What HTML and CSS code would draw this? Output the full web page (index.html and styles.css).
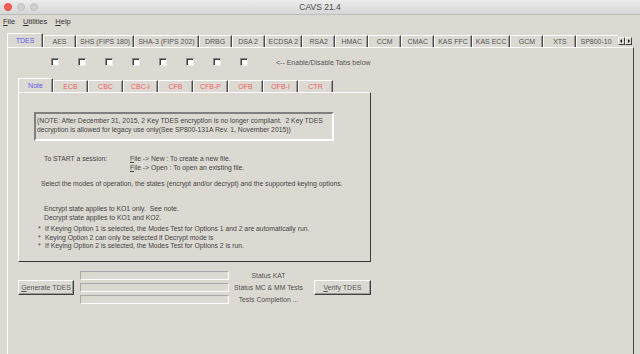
FILE: index.html
```html
<!DOCTYPE html>
<html lang="en">
  <head>
    <meta charset="UTF-8" />
    <title>CAVS 21.4</title>
    <link rel="stylesheet" href="styles.css">
  </head>
  <body>
    <div class="titlebar">
      <div class="lights">
        <span class="light red"></span>
        <span class="light"></span>
        <span class="light"></span>
      </div>
      <div class="title">CAVS 21.4</div>
    </div>

    <div class="menubar">
      <span class="menu"><u>F</u>ile</span>
      <span class="menu"><u>U</u>tilities</span>
      <span class="menu"><u>H</u>elp</span>
    </div>

    <div class="outer">
      <div class="tabs">
        <div class="tab selected">TDES</div>
        <div class="tab">AES</div>
        <div class="tab">SHS (FIPS 180)</div>
        <div class="tab">SHA-3 (FIPS 202)</div>
        <div class="tab">DRBG</div>
        <div class="tab">DSA 2</div>
        <div class="tab">ECDSA 2</div>
        <div class="tab">RSA2</div>
        <div class="tab">HMAC</div>
        <div class="tab">CCM</div>
        <div class="tab">CMAC</div>
        <div class="tab">KAS FFC</div>
        <div class="tab">KAS ECC</div>
        <div class="tab">GCM</div>
        <div class="tab">XTS</div>
        <div class="tab cut">SP800-10</div>
        <div class="scroll">
          <span class="arrow left"></span>
          <span class="arrow right"></span>
        </div>
      </div>

      <div class="panel">
        <div class="checks">
          <span class="check"></span>
          <span class="check"></span>
          <span class="check"></span>
          <span class="check"></span>
          <span class="check"></span>
          <span class="check"></span>
          <span class="check"></span>
          <span class="check"></span>
          <span class="check-label">&lt;-- Enable/Disable Tabs below</span>
        </div>

        <div class="subtabs">
          <div class="subtab selected">Note</div>
          <div class="subtab">ECB</div>
          <div class="subtab">CBC</div>
          <div class="subtab">CBC-I</div>
          <div class="subtab">CFB</div>
          <div class="subtab">CFB-P</div>
          <div class="subtab">OFB</div>
          <div class="subtab">OFB-I</div>
          <div class="subtab">CTR</div>
        </div>

        <div class="subpanel">
          <div class="note">
            (NOTE: After December 31, 2015, 2 Key TDES encryption is no longer compliant.&nbsp; 2 Key TDES<br>
            decryption is allowed for legacy use only(See SP800-131A Rev. 1, November 2015))
          </div>

          <div class="session">
            <span>To START a session:</span>
            <span><u>F</u>ile -&gt; New : To create a new file.</span>
            <span></span>
            <span><u>F</u>ile -&gt; Open : To open an existing file.</span>
          </div>

          <p class="select">Select the modes of operation, the states (encrypt and/or decrypt) and the supported keying options.</p>

          <div class="states">
            <p>Encrypt state applies to KO1 only.&nbsp; See note.</p>
            <p>Decrypt state applies to KO1 and KO2.</p>
          </div>

          <ul class="bullets">
            <li>If Keying Option 1 is selected, the Modes Test for Options 1 and 2 are automatically run.</li>
            <li>Keying Option 2 can only be selected if Decrypt mode is</li>
            <li>If Keying Option 2 is selected, the Modes Test for Options 2 is run.</li>
          </ul>
        </div>

        <div class="actions">
          <button class="btn gen"><u>G</u>enerate TDES</button>
          <div class="bars">
            <div class="bar"></div>
            <div class="bar"></div>
            <div class="bar"></div>
          </div>
          <div class="labels">
            <span>Status KAT</span>
            <span>Status MC &amp; MM Tests</span>
            <span>Tests Completion ...</span>
          </div>
          <button class="btn verify"><u>V</u>erify TDES</button>
        </div>
      </div>
    </div>
  </body>
</html>
```

FILE: styles.css
```css
* {
  margin: 0;
  padding: 0;
  box-sizing: border-box;
}

body {
  width: 640px;
  height: 354px;
  overflow: hidden;
  background: #dcd9d3;
  font-family: "Liberation Sans", Arial, sans-serif;
  font-size: 6.8px;
  color: #444;
}

u {
  text-decoration: underline;
  text-underline-offset: 1px;
}

/* window chrome */
.titlebar {
  height: 15px;
  position: relative;
  background: linear-gradient(#ececec, #d6d6d6);
  border-bottom: 1px solid #bdbdbd;
}

.lights {
  display: flex;
  gap: 5px;
  padding: 3px 0 0 4px;
}

.light {
  width: 8px;
  height: 8px;
  border-radius: 50%;
  background: #d0d0d0;
  border: 1px solid #c2c2c2;
}

.light.red {
  background: #fc605c;
  border-color: #e0443e;
}

.title {
  position: absolute;
  top: 2px;
  left: 0;
  right: 0;
  text-align: center;
  font-size: 8.5px;
  color: #4a4a4a;
}

.menubar {
  height: 13px;
  display: flex;
  gap: 8px;
  padding: 2px 0 0 3px;
  font-size: 7.5px;
  color: #333;
}

/* outer tab pane */
.outer {
  margin: 5px 0 0 7px;
  width: 627px;
}

.tabs {
  display: flex;
  align-items: flex-end;
  height: 14px;
}

.tab {
  flex-shrink: 0;
  height: 12px;
  min-width: 33px;
  padding: 0 3px;
  line-height: 11px;
  font-size: 7px;
  text-align: center;
  white-space: nowrap;
  color: #555;
  border-top: 1px solid #ffffff;
  border-left: 1px solid #ffffff;
  border-right: 1px solid #4a4a4a;
  box-shadow: inset -1px 0 #9a9a9a;
}

.tab.selected {
  height: 14px;
  min-width: 36px;
  line-height: 13px;
  color: #5a5aee;
}

.tab.cut {
  flex-shrink: 1;
  overflow: hidden;
  width: 42px;
  min-width: 0;
  padding: 0 0 0 3px;
  text-align: left;
  border-right: none;
  box-shadow: none;
}

.scroll {
  display: flex;
  flex-shrink: 0;
  align-self: center;
  margin-top: 1px;
}

.arrow {
  width: 7px;
  height: 8px;
  position: relative;
  background: #dcd9d3;
  border-top: 1px solid #fff;
  border-left: 1px solid #fff;
  border-right: 1px solid #404040;
  border-bottom: 1px solid #404040;
}

.arrow::after {
  content: "";
  position: absolute;
  top: 1px;
  left: 1px;
  border-top: 2px solid transparent;
  border-bottom: 2px solid transparent;
}

.arrow.left::after {
  border-right: 2px solid #111;
}

.arrow.right::after {
  left: 2px;
  border-left: 2px solid #111;
}

.panel {
  height: 310px;
  border-top: 1px solid #ffffff;
  border-left: 1px solid #ffffff;
  border-right: 1px solid #4a4a4a;
  padding: 0 0 0 10px;
}

.checks {
  display: flex;
  align-items: center;
  height: 24px;
  padding: 4px 0 0 33px;
}

.check {
  width: 8px;
  height: 8px;
  margin-right: 19px;
  background: #ffffff;
  border-top: 1px solid #8a8a8a;
  border-left: 1px solid #8a8a8a;
  border-right: 1px solid #e8e8e8;
  border-bottom: 1px solid #e8e8e8;
  box-shadow: inset 1px 1px #404040;
}

.check-label {
  margin-left: 9px;
  font-size: 7px;
  color: #555;
}

/* inner tab pane */
.subtabs {
  display: flex;
  align-items: flex-end;
  height: 14px;
  margin-top: 6px;
}

.subtab {
  width: 35px;
  height: 12px;
  line-height: 11px;
  text-align: center;
  font-size: 7px;
  color: #f06262;
  border-top: 1px solid #ffffff;
  border-left: 1px solid #ffffff;
  border-right: 1px solid #4a4a4a;
  box-shadow: inset -1px 0 #9a9a9a;
}

.subtab.selected {
  height: 14px;
  line-height: 13px;
  color: #5a5aee;
}

.subpanel {
  width: 353px;
  height: 170px;
  border-top: 1px solid #ffffff;
  border-left: 1px solid #ffffff;
  border-right: 1px solid #3a3a3a;
  border-bottom: 1px solid #3a3a3a;
  padding: 19px 0 0 15px;
}

.note {
  width: 300px;
  height: 29px;
  padding: 2px 0 0 1px;
  line-height: 9px;
  border-top: 2px solid #808080;
  border-left: 2px solid #808080;
  border-right: 2px solid #ffffff;
  border-bottom: 2px solid #ffffff;
}

.session {
  display: grid;
  grid-template-columns: 86px auto;
  row-gap: 1px;
  line-height: 8px;
  margin: 14px 0 0 10px;
}

.select {
  line-height: 8px;
  margin: 8px 0 0 7px;
}

.states {
  margin: 17px 0 0 10px;
  line-height: 8px;
}

.states p {
  margin-bottom: 1px;
}

.bullets {
  list-style: none;
  margin: 3px 0 0 4px;
  line-height: 8.5px;
}

.bullets li::before {
  content: "*";
  display: inline-block;
  width: 7px;
}

/* bottom actions */
.actions {
  display: flex;
  align-items: center;
  margin-top: 8px;
  height: 34px;
}

.btn {
  height: 15px;
  font-family: "Liberation Sans", Arial, sans-serif;
  font-size: 7px;
  color: #555;
  background: #dcd9d3;
  border-top: 1px solid #ffffff;
  border-left: 1px solid #ffffff;
  border-right: 1px solid #404040;
  border-bottom: 1px solid #404040;
  box-shadow: inset -1px -1px #9a9a9a;
}

.gen {
  width: 56px;
}

.verify {
  width: 57px;
  margin-left: 6px;
}

.bars {
  display: flex;
  flex-direction: column;
  gap: 3px;
  margin-left: 6px;
}

.bar {
  width: 149px;
  height: 9px;
  border-top: 1px solid #a8a8a8;
  border-left: 1px solid #a8a8a8;
  border-right: 1px solid #ffffff;
  border-bottom: 1px solid #ffffff;
}

.labels {
  width: 79px;
  display: flex;
  flex-direction: column;
  gap: 3px;
  text-align: center;
  line-height: 9px;
  color: #505050;
}
```
